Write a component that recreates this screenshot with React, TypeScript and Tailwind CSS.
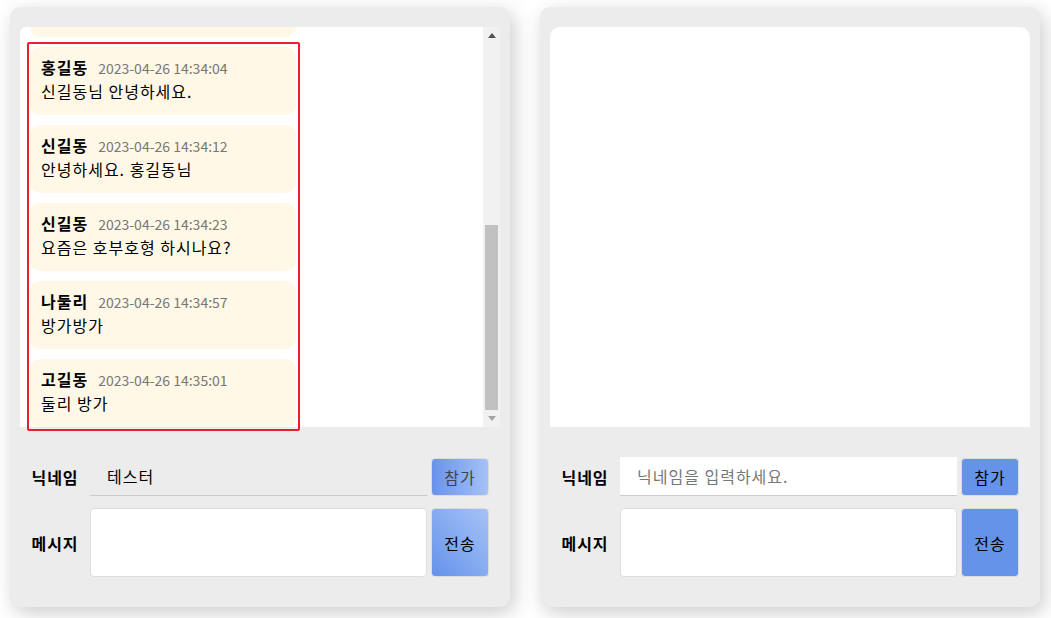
import React from "react";

type Msg = { name: string; time: string; text: string };

const messages: Msg[] = [
  { name: "홍길동", time: "2023-04-26 14:34:04", text: "신길동님 안녕하세요." },
  { name: "신길동", time: "2023-04-26 14:34:12", text: "안녕하세요. 홍길동님" },
  { name: "신길동", time: "2023-04-26 14:34:23", text: "요즘은 호부호형 하시나요?" },
  { name: "나둘리", time: "2023-04-26 14:34:57", text: "방가방가" },
  { name: "고길동", time: "2023-04-26 14:35:01", text: "둘리 방가" },
];

const font = "font-['Noto_Sans_CJK_KR','Noto_Sans',sans-serif]";

function Bubble({ m }: { m: Msg }) {
  return (
    <div className="h-[68px] w-[266px] shrink-0 rounded-[10px] bg-[#fff8e6] px-[11px] pt-[9px] text-[16px] leading-[23px] tracking-[1px] text-black">
      <div className="flex items-baseline gap-[10px]">
        <span className="font-bold">{m.name}</span>
        <span className="text-[14px] tracking-normal text-[#777]">{m.time}</span>
      </div>
      <div>{m.text}</div>
    </div>
  );
}

function Scrollbar() {
  return (
    <div className="flex h-full w-[17px] shrink-0 flex-col bg-[#f1f1f1]">
      <div className="flex h-[17px] items-center justify-center">
        <svg width="8" height="5" viewBox="0 0 8 5">
          <polygon points="0,5 8,5 4,0" fill="#505050" />
        </svg>
      </div>
      <div className="flex flex-1 flex-col justify-end px-[2px]">
        <div className="h-[185px] bg-[#c1c1c1]" />
      </div>
      <div className="flex h-[17px] items-center justify-center">
        <svg width="8" height="5" viewBox="0 0 8 5">
          <polygon points="0,0 8,0 4,5" fill="#a3a3a3" />
        </svg>
      </div>
    </div>
  );
}

function Form({ joined }: { joined: boolean }) {
  return (
    <div className="mt-[30px] flex flex-col gap-[12px] tracking-[1px]">
      <div className="flex h-[39px] items-center">
        <div className="w-[70px] text-center text-[16px] font-bold text-black">닉네임</div>
        <input
          readOnly
          value={joined ? "테스터" : ""}
          placeholder="닉네임을 입력하세요."
          className={`h-[39px] w-[337px] border-b border-[#cccccc] pl-[17px] text-[16px] tracking-[1px] text-black outline-none placeholder:text-[#777] ${
            joined ? "bg-transparent" : "bg-white"
          }`}
        />
        <button
          className={`ml-[4px] h-[38px] w-[58px] rounded-[4px] border border-[#dcdcdc] text-[16px] tracking-[1px] ${
            joined
              ? "bg-linear-to-r from-[#6893ea] to-[#a6c2f6] text-[#444]"
              : "bg-[#6593ea] text-black"
          }`}
        >
          참가
        </button>
      </div>
      <div className="flex h-[69px] items-center">
        <div className="w-[70px] text-center text-[16px] font-bold text-black">메시지</div>
        <textarea className="h-[69px] w-[337px] resize-none rounded-[4px] border border-[#dddddd] bg-white outline-none" />
        <button
          className={`ml-[4px] h-[69px] w-[58px] rounded-[4px] border border-[#dcdcdc] text-[16px] tracking-[1px] text-black ${
            joined ? "bg-linear-to-tr from-[#6593ea] to-[#a6c2f6]" : "bg-[#6593ea]"
          }`}
        >
          전송
        </button>
      </div>
    </div>
  );
}

export default function App() {
  return (
    <div className={`${font} h-[618px] w-[1051px] overflow-hidden bg-white`}>
      <div className="flex gap-[30px] pl-[10px] pt-[7px]">
        {/* Left panel */}
        <div className="relative h-[600px] w-[500px] rounded-[10px] bg-[#ececec] px-[10px] pt-[20px] shadow-[4px_6px_20px_rgba(0,0,0,0.2)]">
          <div className="flex h-[400px] w-[480px] overflow-hidden rounded-tl-[6px] bg-white">
            <div className="flex h-full flex-1 flex-col justify-end gap-[10px] overflow-hidden pl-[10px]">
              <div className="h-[68px] w-[266px] shrink-0 rounded-[10px] bg-[#fff8e6]" />
              {messages.map((m, i) => (
                <Bubble key={i} m={m} />
              ))}
            </div>
            <Scrollbar />
          </div>
          <Form joined={true} />
          <div className="pointer-events-none absolute left-[17px] top-[35px] h-[389px] w-[273px] rounded-[2px] border-2 border-[#e8202e]" />
        </div>
        {/* Right panel */}
        <div className="h-[600px] w-[500px] rounded-[10px] bg-[#ececec] px-[10px] pt-[20px] shadow-[4px_6px_20px_rgba(0,0,0,0.2)]">
          <div className="h-[400px] w-[480px] rounded-t-[10px] bg-white" />
          <Form joined={false} />
        </div>
      </div>
    </div>
  );
}
